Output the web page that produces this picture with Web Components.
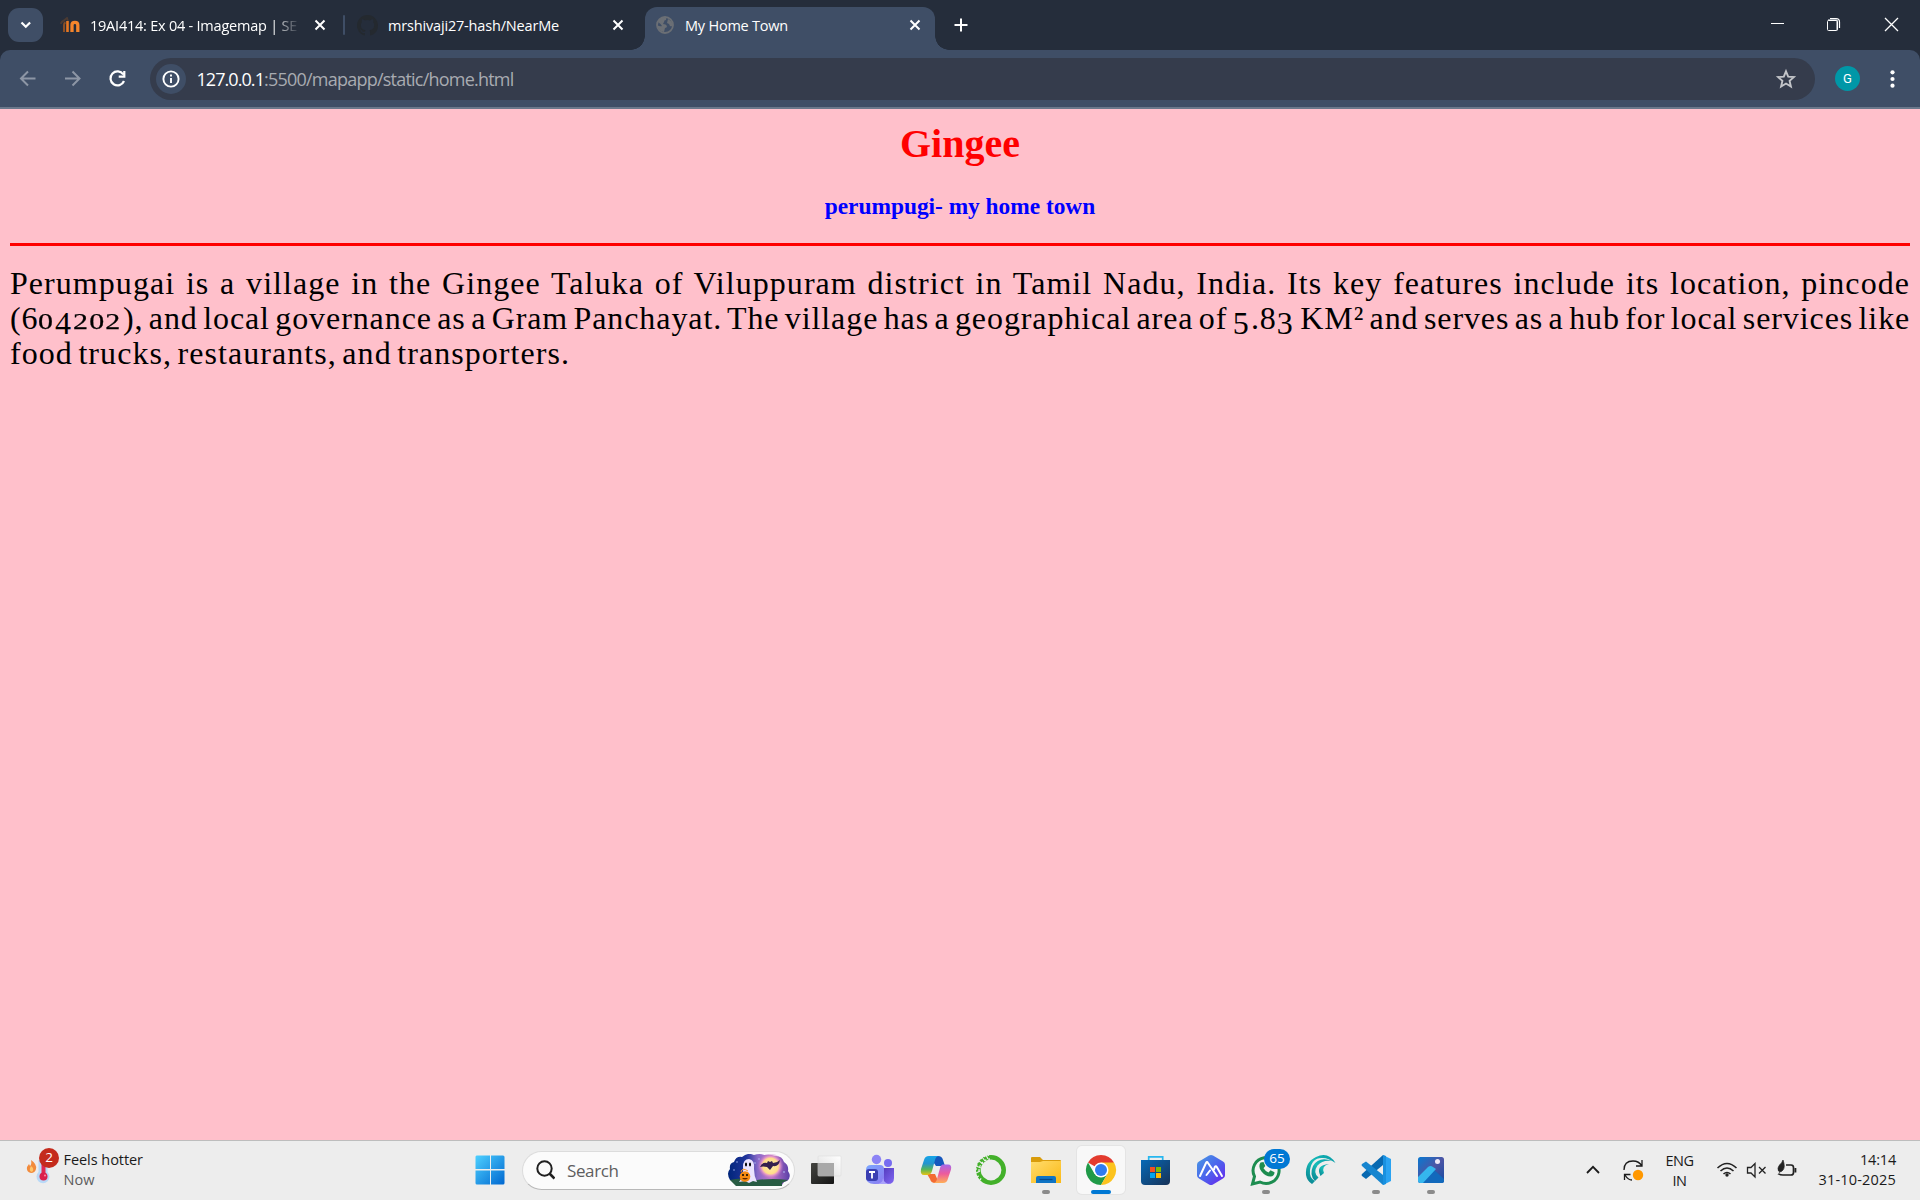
<!DOCTYPE html>
<html lang="en">
<head>
<meta charset="utf-8">
<title>My Home Town</title>
<style>
html,body{margin:0;height:100%;overflow:hidden}
body{font-family:"Open Sans","Noto Sans",sans-serif}
</style>
</head>
<body>
<desk-screen></desk-screen>
<script>
function component(name, html, setup){
  customElements.define(name, class extends HTMLElement{
    constructor(){
      super();
      const t=document.createElement('template');
      t.innerHTML=html;
      this.attachShadow({mode:'open'}).appendChild(t.content.cloneNode(true));
      if(setup) setup(this,this.shadowRoot);
    }
  });
}

component('desk-screen',`
<style>:host{display:flex;flex-direction:column;width:1920px;height:1200px;overflow:hidden}home-page{flex:1}</style>
<tab-strip></tab-strip><tool-bar></tool-bar><home-page></home-page><task-bar></task-bar>`);

/* ---------- browser chrome ---------- */
component('tab-strip',`
<style>
:host{display:flex;height:50px;background:#252d3b;color:#fff;align-items:stretch}
.menu{width:35px;height:34px;margin:8px 0 0 8px;border-radius:11px;background:#3f4e66}
.sep{width:2px;height:20px;background:#3f4e66;border-radius:1px;margin:15px 12px 0 15px}
.t1{margin-left:16px;width:269px}.t2{width:269px}.t3{margin-left:19px;width:290px}
.plus{width:36px;margin-left:8px}.grow{flex:1}
svg{display:block}
.win{display:flex;width:186px}
</style>
<svg class="menu" viewBox="0 0 35 34"><path d="M13.500 14.500l4.300 4.300 4.300-4.300" fill="none" stroke="#fff" stroke-width="2.200"/></svg>
<browser-tab class="t1" label="19AI414: Ex 04 - Imagemap | SE" w="207" fade>
<svg width="21" height="16" viewBox="0 0 21 16"><path d="M2 7q0-3 4-3.500M3 5l5-4 1 3" stroke="#4b3a32" stroke-width="1.800" fill="none"/><path d="M5 15V8q0-2 1.500-2.500" stroke="#8b4e24" stroke-width="2" fill="none"/><path d="M8.500 15V4" stroke="#e87722" stroke-width="2.600"/><path d="M13 15V8q0-2.700 2.900-2.700T18.800 8v7" stroke="#f5852b" stroke-width="3.300" fill="none"/></svg>
</browser-tab>
<div class="sep"></div>
<browser-tab class="t2" label="mrshivaji27-hash/NearMe" w="171">
<svg width="21" height="21" viewBox="0 0 16 16"><path fill="#24292f" d="M8 0C3.580 0 0 3.580 0 8c0 3.540 2.290 6.530 5.470 7.590.4.070.55-.17.55-.38 0-.19-.01-.82-.01-1.490-2.010.37-2.530-.49-2.690-.94-.09-.23-.48-.94-.82-1.130-.28-.15-.68-.52-.01-.53.63-.01 1.080.58 1.230.82.72 1.210 1.870.87 2.330.66.070-.52.28-.87.51-1.070-1.780-.2-3.640-.89-3.640-3.950 0-.87.31-1.590.82-2.150-.08-.2-.36-1.020.08-2.120 0 0 .67-.21 2.200.82a7.600 7.600 0 0 1 4 0c1.530-1.040 2.200-.82 2.200-.82.44 1.100.16 1.920.08 2.120.51.56.82 1.270.82 2.150 0 3.070-1.870 3.750-3.650 3.950.29.25.54.73.54 1.480 0 1.070-.01 1.930-.01 2.200 0 .21.15.46.55.38A8 8 0 0 0 16 8c0-4.420-3.580-8-8-8z"/></svg>
</browser-tab>
<browser-tab class="t3" label="My Home Town" w="103" active>
<svg width="18" height="18" viewBox="0 0 18 18"><circle cx="9" cy="9" r="8" fill="none" stroke="#6b6f75" stroke-width="1.800"/><path d="M2 6q2-5 7-5 2 1 1 3-2 0-2 2l-1 2q3 0 4 2 0 2-2 2l-1 4Q2 15 1 9q3 2 5 1-1-2-4-4M12 3q4 2 5 6-1 2-3 1l-1-2-2-1z" fill="#6b6f75"/></svg>
</browser-tab>
<svg class="plus" viewBox="0 0 36 50"><path d="M18 18.500v13M11.500 25h13" stroke="#fff" stroke-width="2"/></svg>
<div class="grow"></div>
<svg class="win" viewBox="1734 0 186 50" fill="none" stroke="#fff"><path d="M1771 23.500h13"/><path d="M1830 18.500h6q3.500 0 3.500 3.500v6" stroke-width="1.200"/><path d="M1828 20h9v10" stroke="#9399a2" stroke-width="2"/><rect x="1827.500" y="20.500" width="10" height="10" rx="1"/><path d="M1885 18l13 13M1898 18l-13 13" stroke-width="1.300"/></svg>`);

component('browser-tab',`
<style>
:host{display:flex;align-items:center;box-sizing:border-box;position:relative;height:50px;font-size:14.500px}
:host([active]){height:43px;margin-top:7px;background:#3f4e66;border-radius:12px 12px 0 0;padding:0 12px 7px 11px}
:host([active])::before,:host([active])::after{content:"";position:absolute;bottom:0;width:14px;height:14px}
:host([active])::before{left:-14px;background:radial-gradient(circle at 0 0,transparent 13.500px,#3f4e66 14px)}
:host([active])::after{right:-14px;background:radial-gradient(circle at 100% 0,transparent 13.500px,#3f4e66 14px)}
.label{flex:1;overflow:hidden;margin-left:10px;line-height:22px;padding-top:1px;white-space:nowrap}
:host([active]) .label{margin-left:11px}
:host([fade]) .label{flex:0 0 207px;-webkit-mask-image:linear-gradient(90deg,#000 182px,transparent 210px)}
.x{width:16px;height:16px;display:block;margin-left:auto}
::slotted(svg){display:block;flex:none}
</style>
<slot></slot><div class="label"></div>
<svg class="x" viewBox="0 0 16 16"><path d="M3.500 3.500l9 9M12.500 3.500l-9 9" stroke="#fff" stroke-width="2"/></svg>`,
(el,root)=>{
  const f=document.createElement('fit-text');
  f.setAttribute('w',el.getAttribute('w'));
  f.textContent=el.getAttribute('label');
  root.querySelector('.label').append(f);
});

component('tool-bar',`
<style>
:host{display:block;background:#252d3b;height:59px}
.bar{display:flex;align-items:center;box-sizing:border-box;height:59px;background:#3f4e66;border-bottom:2px solid #6b788b;border-radius:10px 10px 0 0}
.nav{width:150px;height:57px}
.omni{display:flex;align-items:center;width:1665px;height:42px;border-radius:21px;background:#353c4c;font-size:18px;color:#a8abb1;line-height:26px}
.omni b{font-weight:400;color:#fff}
.info{width:30px;height:30px;margin:0 10.500px 0 6px}
.star{width:22px;height:22px;margin:0 18.500px 0 auto}
.me{width:25px;height:25px;border-radius:50%;background:#0097a7;color:#fff;font:13px/25px Roboto,sans-serif;text-align:center;margin-left:20px}
.dots{width:20px;height:30px;margin-left:22px}
</style>
<div class="bar">
<svg class="nav" viewBox="0 50 150 57" fill="none" stroke-width="2"><g stroke="#8d96a5"><path d="M35.500 78.500H21.500M28 71.500l-7 7 7 7"/><path d="M65 78.500h14M72.500 71.500l7 7-7 7"/></g><path stroke="#fff" stroke-width="2.200" d="M123.300 74.500A7 7 0 1 0 124 81M124.300 71v5.600h-5.600"/></svg>
<div class="omni">
<svg class="info" viewBox="0 0 30 30"><circle cx="15" cy="15" r="15" fill="#3f4e66"/><circle cx="15" cy="15" r="7.600" fill="none" stroke="#fff" stroke-width="1.900"/><path d="M15 14v5M15 10.500v2" stroke="#fff" stroke-width="1.900"/></svg>
<b><fit-text w="67.500">127.0.0.1</fit-text></b><fit-text w="249.500">:5500/mapapp/static/home.html</fit-text>
<svg class="star" viewBox="0 0 22 22"><path d="M11 3.300l2.200 5.300 5.700.5-4.300 3.800 1.300 5.600-4.900-3-4.900 3 1.300-5.600L3.100 9.100l5.700-.5z" fill="none" stroke="#c3c5c9" stroke-width="1.900"/></svg>
</div>
<div class="me">G</div>
<svg class="dots" viewBox="0 0 20 30" fill="#fff"><circle cx="10.500" cy="8.300" r="2.100"/><circle cx="10.500" cy="15" r="2.100"/><circle cx="10.500" cy="21.700" r="2.100"/></svg>
</div>`);

/* ---------- page ---------- */
component('home-page',`
<style>
:host{display:block;box-sizing:border-box;background:#ffc0cb;padding:12px 10px 0;font-family:"Liberation Serif",serif}
h1{margin:0;font-size:40px;line-height:46px;color:red;text-align:center}
h3{margin:26px 0 23px;font-size:23.400px;line-height:27px;color:blue;text-align:center}
.rule{height:3px;background:red}
p{margin:20px 0 0;font-size:32px;line-height:35px;color:#000;word-spacing:-3.500px}
.line{display:block;text-align:justify;text-align-last:justify;white-space:nowrap}
.last{text-align-last:left}
i{font-style:normal;line-height:0}
.s{display:inline-block;font-size:.72em;-webkit-text-stroke:.25px #000;transform:scaleX(1.3);transform-origin:0 50%;margin-right:.18em}
.s3{margin-right:.54em}
.d{position:relative;top:.17em;margin-right:.04em}
</style>
<h1>Gingee</h1>
<h3><fit-text w="270.500">perumpugi- my home town</fit-text></h3>
<div class="rule"></div>
<p><span class="line">Perumpugai is a village in the Gingee Taluka of Viluppuram district in Tamil Nadu, India. Its key features include its location, pincode </span><span class="line last"><fit-text w="1900">(6<i class="s">0</i><i class="d">4</i><i class="s s3">202</i>), and local governance as a Gram Panchayat. The village has a geographical area of <i class="d">5</i>.8<i class="d">3</i> KM² and serves as a hub for local services like</fit-text></span><span class="line last"><fit-text w="560">food trucks, restaurants, and transporters.</fit-text></span></p>`,
(el,root)=>{
  requestAnimationFrame(()=>{
    const lines=root.querySelectorAll('p fit-text');
    root.querySelector('p').style.letterSpacing=lines[1].style.letterSpacing;
  });
});

/* ---------- taskbar ---------- */
component('task-item',`
<style>
:host{display:block;position:relative;width:48px;height:48px;flex:none;border-radius:5px}
:host([active]){background:#f8f8f8;box-shadow:0 0 0 1px #e4e4e4}
::slotted(svg){display:block;width:48px;height:48px}
:host([run])::after,:host([active])::after{content:"";position:absolute;left:20px;top:44px;width:8px;height:4px;border-radius:2px;background:#8b8b8b}
:host([active])::after{left:14px;width:20px;background:#0078d4}
</style><slot></slot>`);

component('count-badge',`
<style>:host{display:block;position:absolute;background:#0078d4;color:#fff;border-radius:10px;height:20px;text-align:center;font-size:13.500px;line-height:19.500px}</style><slot></slot>`);

component('task-bar',`
<style>
:host{display:flex;align-items:center;box-sizing:border-box;height:60px;background:#ededed;border-top:1px solid #bdbdbd;font-size:14.500px;color:#1b1b1b;line-height:20px;padding-bottom:1px}
svg{display:block;flex:none}
.weather{display:flex;position:relative;width:465.500px;height:48px}
.weather .txt{margin:4px 0 0 .5px}.now{color:#5c5c5c}
.weather count-badge{left:39px;top:2px;width:20px;background:#c42b1c}
.search{display:flex;align-items:center;box-sizing:border-box;width:273px;height:39px;margin:0 7px 0 8.500px;border:1px solid #dcdcdc;border-bottom-color:#b8b8b8;border-radius:20px;background:#fbfbfb;font-size:17px;color:#5e5e5e;padding-left:13px}
.search fit-text{margin-left:12px;padding-top:1px}
.search .art{margin:0 4px 0 auto}
.apps{display:flex;gap:7px}
.wa count-badge{left:22px;top:3px;width:26px}
.tray{display:flex;align-items:center;margin-left:auto;padding-right:24px}
.lang{width:30px;text-align:center;margin:1px 20px 0 20px}
.clock{text-align:right;margin-left:20px}
fit-text{vertical-align:top}
</style>
<div class="weather">
<svg width="63" height="48" viewBox="0 1146 63 48"><path d="M31 1160q6 4 5 9-1 4-5 4-5-1-4-6l2-3 1 2q2-2 1-6" fill="#f28b3c"/><path d="M31 1166q4 3 1 6-4-1-1-6" fill="#ffc66b"/><path d="M38.500 1160h9v12a6.500 6.500 0 1 1-9 0z" fill="#b9d9f7"/><path d="M43.500 1160v16" stroke="#e0284f" stroke-width="4"/><circle cx="43.500" cy="1176.500" r="4" fill="#d91f4c"/><circle cx="45" cy="1175.500" r="1" fill="#ff8ba2"/></svg>
<count-badge>2</count-badge>
<div class="txt"><fit-text w="79.500">Feels hotter</fit-text><br><span class="now"><fit-text w="31">Now</fit-text></span></div>
</div>
<task-item><svg viewBox="0 0 48 48"><defs><linearGradient id="w" x1="0" y1="0" x2="1" y2="1"><stop stop-color="#4dd0ff"/><stop offset="1" stop-color="#0067d0"/></linearGradient></defs><path fill="url(#w)" d="M10.500 9.500h13.500v13.500H9.500V10.500zM25 9.500h12q1.500 0 1.500 1.500v12H25zM9.500 24.500H24V38.500H11q-1.500 0-1.500-1.500zM25 24.500h13.500V37q0 1.500-1.500 1.500H25z"/></svg></task-item>
<div class="search">
<svg width="19" height="20" viewBox="0 0 19 20" fill="none" stroke="#202020"><circle cx="8.500" cy="8.500" r="7.200" stroke-width="2"/><path d="M13.500 13.500l5 5" stroke-width="2.600"/></svg>
<fit-text w="51.500">Search</fit-text>
<svg class="art" width="62" height="32" viewBox="0 0 62 32"><defs><linearGradient id="sky"><stop stop-color="#00257a"/><stop offset=".3" stop-color="#20349b"/><stop offset=".48" stop-color="#8969c8"/><stop offset=".7" stop-color="#c277ca"/><stop offset="1" stop-color="#5940a8"/></linearGradient><radialGradient id="moon"><stop stop-color="#fff0a8"/><stop offset=".6" stop-color="#ffdc8b"/><stop offset=".72" stop-color="#e89cc4"/><stop offset="1" stop-color="#b46cc8" stop-opacity="0"/></radialGradient></defs><path d="M2 26Q-2 19 2 15 1 9 6 8 8 2 14 3q6-5 12-2 6-2 10 0 7-1 10 1 8-1 10 6 5 3 4 9 4 6-1 10l-3 1-2 3H8l-2-4z" fill="url(#sky)"/><circle cx="42.500" cy="12" r="13" fill="url(#moon)"/><path d="M2 26q10-3 27 0 17-2 31 0l-6 3v3H8z" fill="#285c43"/><path d="M11 28q5-6 4-15 0-8 6-8 6 1 5 10 0 7 3 13l-4-1-4 2-4-2z" fill="#ebe3ff"/><ellipse cx="18" cy="10.500" rx="1" ry="2"/><ellipse cx="22" cy="10.500" rx="1" ry="2"/><circle cx="17" cy="22.500" r="5.300" fill="#f58a12"/><path d="M14 24q3 3 6 0z" fill="#5c2700"/><circle cx="15" cy="21" r="1"/><circle cx="19" cy="21" r="1"/><path d="M13 18q1-5 7-1" stroke="#ff9b24" fill="none"/><path d="M32 13q2-5 7-4l1-2 2 1 2-1 1 2q4 0 7-3-1 7-7 6l-3 4-3-3q-4-1-7 0z" fill="#35204d"/><g fill="#b7c8ff"><circle cx="9" cy="8" r=".7"/><circle cx="6" cy="16" r=".7"/><circle cx="31" cy="5" r=".7"/><circle cx="56" cy="18" r=".8"/><circle cx="27" cy="9" r=".7"/></g></svg>
</div>
<div class="apps">
<task-item><svg viewBox="0 0 48 48"><defs><linearGradient id="tv" x1="0" y1="0" x2="1" y2="1"><stop stop-color="#444541"/><stop offset="1" stop-color="#151515"/></linearGradient><linearGradient id="tw" x1="0" y1="1" x2="1" y2="0"><stop stop-color="#ddd"/><stop offset="1" stop-color="#fff"/></linearGradient></defs><rect x="9" y="17" width="23" height="21" rx="1" fill="url(#tv)"/><rect x="16" y="10" width="23" height="20" rx="1" fill="url(#tw)" stroke="#ddd" stroke-width=".6"/><path d="M16 17h16v13H16z" fill="#a9a9a9"/></svg></task-item>
<task-item><svg viewBox="0 0 48 48"><defs><linearGradient id="tm" x1="0" y1="0" x2="1" y2="1"><stop stop-color="#7ba7ff"/><stop offset="1" stop-color="#8c7af0"/></linearGradient><linearGradient id="tn" x1="0" y1="0" x2="1" y2="1"><stop stop-color="#5038b8"/><stop offset="1" stop-color="#8268f4"/></linearGradient></defs><circle cx="19.500" cy="13.500" r="4.700" fill="#8c83f5"/><circle cx="31" cy="17" r="4" fill="#776cf0"/><path d="M26 22h11v10q0 6-6 6h-7z" fill="url(#tn)"/><path d="M14 19h9q4 0 4 4v15H17q-8 0-8-7v-7q0-5 5-5" fill="url(#tm)"/><path d="M18 38q8 0 8-6 1 6 8 6z" fill="#aaa3fb"/><rect x="9" y="23" width="12" height="12" rx="3" fill="#3b3fb2"/><path d="M12 26h6M15 26v6.500" stroke="#fff" stroke-width="1.800"/></svg></task-item>
<task-item><svg viewBox="0 0 48 48"><defs><linearGradient id="ca" x1="0" y1="0" x2="0" y2="1"><stop stop-color="#16a5e8"/><stop offset=".4" stop-color="#2494cf"/><stop offset=".7" stop-color="#55b55b"/><stop offset="1" stop-color="#e7c313"/></linearGradient><linearGradient id="cb" x1="0" y1="0" x2="0" y2="1"><stop stop-color="#a667ea"/><stop offset=".5" stop-color="#ed5b9c"/><stop offset="1" stop-color="#ffaf57"/></linearGradient></defs><path d="M17 10h9q4 0 5 4l2 6h-9z" fill="#1557bd"/><path d="M15 28h8l4 9h-4q-4 0-5-4z" fill="#f36b32"/><path d="M17 10h10q-3 0-4 4l-3 11q-1 4-5 4h-3q-4 0-3-6l3-9q1-4 5-4" fill="url(#ca)"/><path d="M31 18.500h5q4 0 3 5l-3 9q-1 4.500-5 4.500H21q3 0 4-4l3-11q1-3.500 3-3.500" fill="url(#cb)"/></svg></task-item>
<task-item><svg viewBox="0 0 48 48"><circle cx="24" cy="24" r="12.700" fill="none" stroke="#43b02a" stroke-width="4.600"/><path d="M9 24a15 15 0 0 1 13-15M12 25a12 12 0 0 1 11-12M10 31l3-2M13 34l2-3" fill="none" stroke="#ededed" stroke-width="1.300" stroke-dasharray="2 2"/><path d="M12 15l4 3M15 11l3 4M9 20l5 2M19 9l2 4M9 27l4-2" stroke="#ededed" stroke-width="1.200"/></svg></task-item>
<task-item run><svg viewBox="0 0 48 48"><defs><linearGradient id="fo" x1="0" y1="0" x2="1" y2="1"><stop stop-color="#ffdc6d"/><stop offset="1" stop-color="#fbb915"/></linearGradient></defs><path d="M9 18v-6q0-1 1-1h8l3 3h17q1 0 1 1v3z" fill="#d99c0b"/><path d="M9 16h9l3-1h18v22H9z" fill="url(#fo)"/><path d="M14 37v-5q0-2 2-2h16q2 0 2 2v5z" fill="#0f74c4"/><path d="M17.500 33.500h13" stroke="#064a8c" stroke-width="1.200"/></svg></task-item>
<task-item active><svg viewBox="0 0 48 48"><path d="M11 16.500A15 15 0 0 1 37 16.500L24 24z" fill="#e33b2e"/><path d="M11 16.500A15 15 0 0 0 24 39L30.500 27.700 17.500 27.700z" fill="#209a48"/><path d="M24 16.500H37A15 15 0 0 1 24 39L30.500 27.700z" fill="#fcc31e"/><circle cx="24" cy="24" r="7.500" fill="#fff"/><circle cx="24" cy="24" r="6" fill="#2f7cf0"/></svg></task-item>
<task-item><svg viewBox="0 0 48 48"><defs><linearGradient id="st" x1="0" y1="0" x2="1" y2="1"><stop stop-color="#0669b7"/><stop offset="1" stop-color="#173257"/></linearGradient></defs><path d="M16.700 15v-4.200h14V15" fill="none" stroke="#27b7ef" stroke-width="1.700"/><path d="M9 14h29v21q0 4-4 4H13q-4 0-4-4z" fill="url(#st)"/><path d="M18 21h5v5h-5z" fill="#f25022"/><path d="M24 21h5v5h-5z" fill="#7fba00"/><path d="M18 27h5v5h-5z" fill="#00a4ef"/><path d="M24 27h5v5h-5z" fill="#ffb900"/></svg></task-item>
<task-item><svg viewBox="0 0 48 48"><defs><linearGradient id="hx" x1="0" y1="0" x2="1" y2="1"><stop stop-color="#489be2"/><stop offset=".5" stop-color="#4b65ed"/><stop offset="1" stop-color="#6b20ed"/></linearGradient></defs><path d="M22 9.600q2-1 4 0l10 5.800q2 1 2 3.400v10.400q0 2.400-2 3.400l-10 5.800q-2 1-4 0l-10-5.800q-2-1-2-3.400V18.800q0-2.400 2-3.400z" fill="url(#hx)"/><path d="M13 30l6-13q1-1.800 2 0L30 30M19.500 29l3.500-4.500M27 23.500l.8-2.500q1-1.500 2 0L35 30" fill="none" stroke="#fff" stroke-width="2" stroke-linecap="round"/></svg></task-item>
<task-item run class="wa"><svg viewBox="0 0 48 48"><path d="M10.500 38l2-7.600A13 13 0 1 1 18 36z" fill="#f4f4f4" stroke="#1d8d50" stroke-width="3"/><path d="M18.500 16.500l3-.5 1.800 4-1.800 2.300q2 3.200 5 4.200l2-2.300 4 2q0 4-4 4.300-5 0-9-5-3.700-4.700-1-9" fill="#1d8d50"/></svg><count-badge>65</count-badge></task-item>
<task-item><svg viewBox="0 0 48 48"><defs><linearGradient id="wv" x1="0" y1="1" x2="1" y2="0"><stop stop-color="#087e8d"/><stop offset=".5" stop-color="#18bdb9"/><stop offset="1" stop-color="#0898a5"/></linearGradient></defs><g fill="url(#wv)"><path d="M38.500 17Q31 5 19 11 8 16 9 29q1 6 6 9l3-3q-6-3-5-11 2-13 13-12 5 0 12.500 5"/><path d="M35 15q-13-5-19 5-4 9 2 15l3.500-3.500q-6-5-1-12 5-6 14.500-4.500"/><path d="M32 18q-14 1-8.500 12l3.500-3q-3-7 5-9"/></g></svg></task-item>
<task-item run><svg viewBox="0 0 48 48"><path d="M31 9l8 4v22l-8 4z" fill="#2aa3f2"/><path d="M31 9v10L14 33l-4-3q-1-1 0-2z" fill="#0869b1"/><path d="M31 39V29L14 15.500l-4 2.500q-1 1 0 2z" fill="#1685cf"/><path d="M31 9l3 1v28l-3 1z" fill="#1990df"/></svg></task-item>
<task-item run><svg viewBox="0 0 48 48"><defs><linearGradient id="ph" x1="0" y1="0" x2="1" y2="1"><stop stop-color="#0879d1"/><stop offset=".5" stop-color="#4d55a5"/><stop offset="1" stop-color="#154ca2"/></linearGradient><clipPath id="pc"><rect x="11" y="11" width="26" height="26" rx="2.500"/></clipPath></defs><g clip-path="url(#pc)"><path d="M11 11h26v26H11z" fill="url(#ph)"/><path d="M23 20l15 14v4H11z" fill="#1269bc"/><path d="M11 31l10-10q2.500-2 5 0l3 2-13 14h-5z" fill="#35b6ee"/><circle cx="30.500" cy="15.500" r="2.500" fill="#eee9f8"/></g></svg></task-item>
</div>
<div class="tray">
<svg width="60" height="48" viewBox="1585 1146 60 48" fill="none" stroke="#1b1b1b"><path d="M1587 1173l6-6.200 6 6.200" stroke-width="1.800"/><path d="M1624 1170q0-9 9-9 6 0 9 5M1642 1160v6h-6M1624.500 1180v-5.500h6M1625 1175q3 5 7 5" stroke-width="1.300"/><circle cx="1638" cy="1175" r="5.200" fill="#ff9800" stroke="none"/></svg>
<div class="lang"><fit-text w="28">ENG</fit-text><br><fit-text w="14">IN</fit-text></div>
<svg width="84" height="48" viewBox="1716 1146 84 48" fill="none" stroke="#222" stroke-width="1.600"><path d="M1718.500 1168q9.500-9 19 0M1721.500 1171q6.500-6 13 0M1724.500 1174q3.500-3 7 0"/><circle cx="1728" cy="1175" r="1.700" fill="#222" stroke="none"/><path d="M1748.500 1167.500h3.500l4-4v13.500l-4-4h-3.500zM1760 1167l6.500 6.500M1766.500 1167l-6.500 6.500" stroke-width="1.300"/><path d="M1787 1165h5q2.500 0 2.500 2.500v5q0 2.500-2.500 2.500h-8q-3 0-4-1M1796.500 1168v4.500" stroke-width="1.700"/><path d="M1784 1160q2.500 7 0 10-2 3-4.500 1-1.500-3 1-6 2.500-2 3.500-5M1779 1175l4-7" fill="#222" stroke-width=".7"/></svg>
<div class="clock"><fit-text w="36">14:14</fit-text><br><fit-text w="77.500">31-10-2025</fit-text></div>
</div>`);

/* Spreads its text over the width given in w by adjusting the letter spacing. */
customElements.define('fit-text', class extends HTMLElement{
  connectedCallback(){
    if(this.shadowRoot) return;
    this.attachShadow({mode:'open'}).innerHTML='<style>:host{display:inline-block;white-space:nowrap}</style><slot></slot>';
    this.style.letterSpacing='0px';
    const gap=(parseFloat(this.getAttribute('w'))-this.getBoundingClientRect().width)/this.textContent.length;
    this.style.letterSpacing=gap.toFixed(3)+'px';
  }
});
</script>
</body>
</html>
